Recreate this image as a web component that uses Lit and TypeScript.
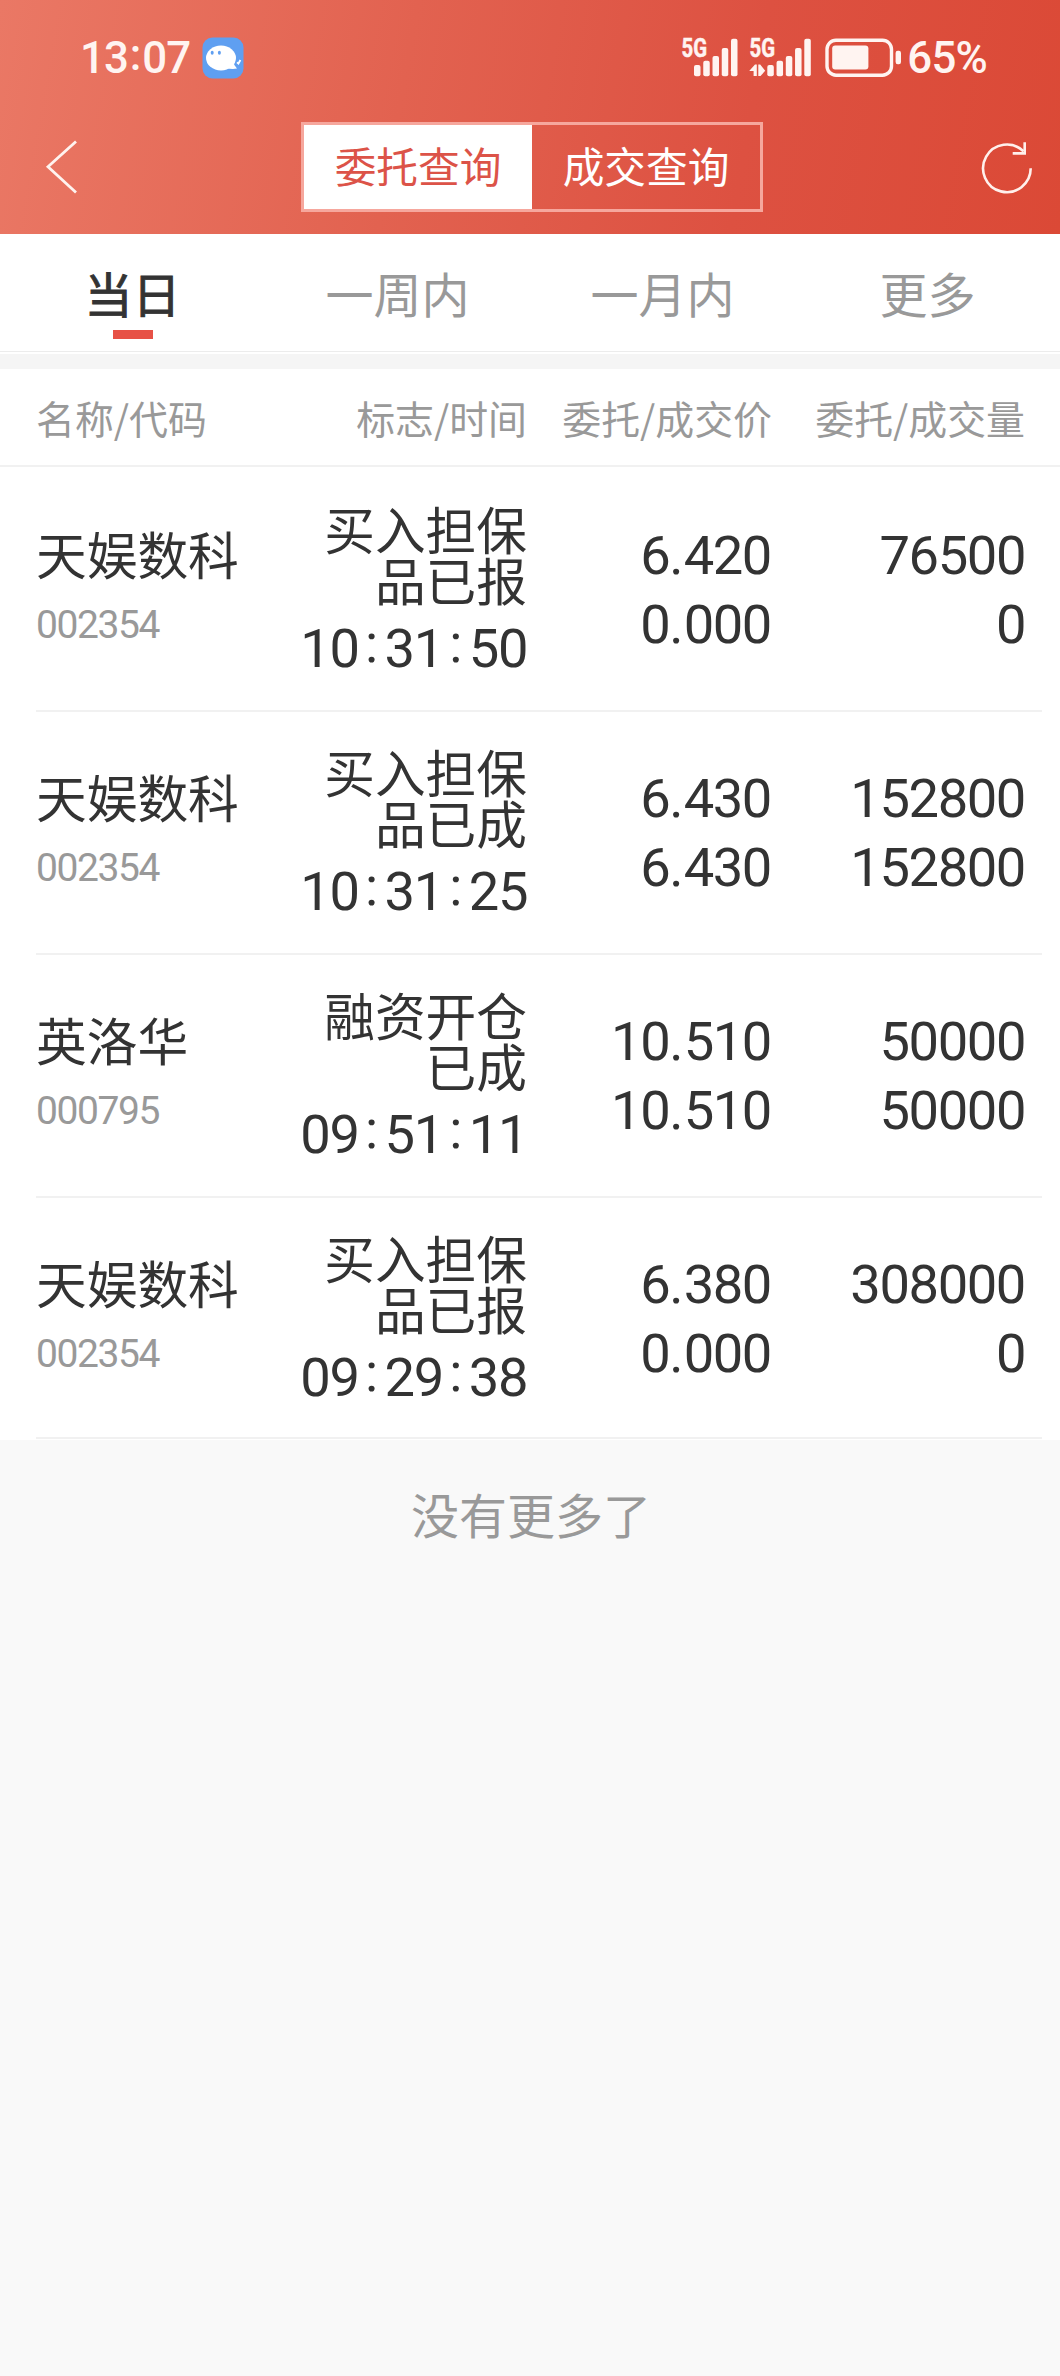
import { LitElement, html, css, svg } from "lit";
import { customElement, property, state } from "lit/decorators.js";
import { classMap } from "lit/directives/class-map.js";

interface Order {
  name: string;
  code: string;
  flag: [string, string];
  time: string;
  price: [string, string];
  volume: [string, string];
}

const ORDERS: Order[] = [
  { name: "天娱数科", code: "002354", flag: ["买入担保", "品已报"], time: "10:31:50", price: ["6.420", "0.000"], volume: ["76500", "0"] },
  { name: "天娱数科", code: "002354", flag: ["买入担保", "品已成"], time: "10:31:25", price: ["6.430", "6.430"], volume: ["152800", "152800"] },
  { name: "英洛华", code: "000795", flag: ["融资开仓", "已成"], time: "09:51:11", price: ["10.510", "10.510"], volume: ["50000", "50000"] },
  { name: "天娱数科", code: "002354", flag: ["买入担保", "品已报"], time: "09:29:38", price: ["6.380", "0.000"], volume: ["308000", "0"] },
];

/** Android status bar: clock, chat notification, signals and battery. */
@customElement("status-bar")
export class StatusBar extends LitElement {
  static styles = css`
    :host { display: block; }
    .bar {
      display: flex;
      justify-content: space-between;
      align-items: center;
      height: 116px;
      padding: 0 73px 0 80px;
      box-sizing: border-box;
      font: 500 43.8px/52px Roboto, sans-serif;
      letter-spacing: -0.8px;
      color: #fff4f1;
    }
    .group { display: flex; align-items: center; }
    .chat { display: block; margin-left: 12px; }
    .colon { display: inline-block; width: 14px; text-align: center; line-height: 44px; vertical-align: 3px; }
    .signals { display: block; }
    .small { font: 700 25px Roboto, sans-serif; letter-spacing: 0; stroke: #fff4f1; stroke-width: 0.5; }
  `;

  private bars(x: number) {
    const tops = [65, 60.7, 56, 48, 38.7];
    return tops.map(
      (t, i) => svg`<rect x=${x + i * 9.25} y=${t - 36} width="6.5" height=${76.2 - t} rx="2" />`
    );
  }

  render() {
    return html`
      <div class="bar">
        <div class="group">
          <span>13<span class="colon">:</span>07</span>
          <svg class="chat" width="42" height="42" viewBox="0 0 42 42">
            <rect x="0.5" y="0.5" width="41" height="41" rx="10" fill="#5f9ff1" />
            <ellipse cx="19" cy="21" rx="15" ry="12.5" fill="#fff" />
            <path d="M31 24 Q32 29 35 31.5 Q30 32.5 24 31 Z" fill="#fff" />
            <ellipse cx="10.2" cy="15.8" rx="1.5" ry="2" fill="#5f9ff1" />
            <ellipse cx="17.4" cy="15.8" rx="1.5" ry="2" fill="#5f9ff1" />
            <path d="M35 25.4 L36.4 26.6 L38.4 23" fill="none" stroke="#fff" stroke-width="1.9" />
          </svg>
        </div>
        <div class="group">
          <svg class="signals" width="227" height="60" viewBox="0 -8 227 60" fill="#fff4f1">
            <text class="small" x="1.5" y="21.3" textLength="25.5" lengthAdjust="spacingAndGlyphs">5G</text>
            ${this.bars(14)}
            <text class="small" x="69.5" y="21.3" textLength="25.5" lengthAdjust="spacingAndGlyphs">5G</text>
            <path d="M69.2 35 L75 28.5 H76.8 V40 H73.6 V35 Z M78.3 28.5 H80.2 L85.2 34.8 L80.5 40 H78.3 Z" />
            ${this.bars(87.3)}
            <rect x="147" y="4.2" width="64.5" height="35" rx="9" fill="none" stroke="#fff4f1" stroke-width="3.4" />
            <rect x="152.2" y="9.6" width="36.2" height="24" rx="3" />
            <rect x="215.6" y="14.8" width="5.4" height="13.4" rx="2.2" />
          </svg>
          <span>65%</span>
        </div>
      </div>
    `;
  }
}

/** Title bar with the back button, the two-way switch and refresh. */
@customElement("title-bar")
export class TitleBar extends LitElement {
  static styles = css`
    :host { display: block; }
    .bar {
      display: flex;
      justify-content: space-between;
      align-items: flex-start;
      padding: 6px 26px 0 44px;
    }
    .icon { display: block; margin-top: 15px; }
    .switch {
      display: flex;
      box-sizing: border-box;
      width: 462px;
      height: 90px;
      margin-left: 4px;
      border: 3px solid #f6a79d;
    }
    .option {
      flex: 1;
      text-align: center;
      font: 400 41.7px/81px "Noto Sans CJK SC", sans-serif;
      color: #fff;
    }
    .active { background: #fff; color: #dc5348; }
  `;

  @state() private selected = 0;

  render() {
    return html`
      <div class="bar">
        <svg class="icon" width="36" height="60" viewBox="0 0 36 60" fill="none" stroke="#fff3ef" stroke-width="2.8">
          <path d="M32 4.5 L4 29.8 L32 55.5" />
        </svg>
        <div class="switch">
          ${["委托查询", "成交查询"].map(
            (label, i) => html`<div
              class=${classMap({ option: true, active: i === this.selected })}
              @click=${() => (this.selected = i)}
            >${label}</div>`
          )}
        </div>
        <svg class="icon" width="54" height="60" viewBox="0 0 54 60" fill="none" stroke="#fff0ec" stroke-width="2.6">
          <path d="M50.7 31.3 A23.8 23.8 0 1 1 43.5 14.3" />
          <path d="M44.7 5.3 V16.4 H32.7" />
        </svg>
      </div>
    `;
  }
}

/** Period tabs. */
@customElement("period-tabs")
export class PeriodTabs extends LitElement {
  static styles = css`
    :host { display: block; }
    .tabs {
      display: grid;
      grid-template-columns: repeat(4, 1fr);
      height: 117px;
      background: #fff;
      border-bottom: 1px solid #ececec;
    }
    .tab {
      display: flex;
      flex-direction: column;
      align-items: center;
      padding-top: 23px;
      font: 400 48px/70px "Noto Sans CJK SC", sans-serif;
      color: #999;
    }
    .active { color: #333; -webkit-text-stroke: 0.9px #333; }
    .active::after { content: ""; width: 40px; height: 9px; margin-top: 3px; background: #e75146; }
  `;

  @state() private selected = 0;

  render() {
    return html`<div class="tabs">
      ${["当日", "一周内", "一月内", "更多"].map(
        (label, i) => html`<div
          class=${classMap({ tab: true, active: i === this.selected })}
          @click=${() => (this.selected = i)}
        >${label}</div>`
      )}
    </div>`;
  }
}

/** One order in the list. */
@customElement("order-row")
export class OrderRow extends LitElement {
  static styles = css`
    :host { display: block; height: 243px; }
    .row {
      display: grid;
      grid-template-columns: 240px 251px 244px 254px;
      box-sizing: border-box;
      height: 100%;
      margin: 0 18px 0 36px;
      border-bottom: 2px solid #f1f1f1;
      color: #333;
    }
    .name { padding-top: 47px; font: 400 50.7px/74px "Noto Sans CJK SC", sans-serif; }
    .code { font: 400 39px/60px Roboto, sans-serif; letter-spacing: -1.4px; color: #999; margin-top: 5px; }
    .right { text-align: right; }
    .flag { padding-top: 34px; font: 400 50.7px/51px "Noto Sans CJK SC", sans-serif; }
    .num { font: 400 54.3px/69px Roboto, sans-serif; letter-spacing: -1.4px; }
    .time { margin-top: 9px; }
    .values { padding-top: 52px; }
    .dot, .colon { display: inline-block; text-align: center; letter-spacing: 0; }
    .dot { width: 14.3px; }
    .colon { width: 26px; line-height: 40px; vertical-align: 5px; }
  `;

  @property({ attribute: false }) order!: Order;

  private num(text: string) {
    return text
      .split(/([.:])/)
      .map((p) =>
        p === "." ? html`<span class="dot">.</span>` : p === ":" ? html`<span class="colon">:</span>` : p
      );
  }

  render() {
    const o = this.order;
    return html`<div class="row">
      <div>
        <div class="name">${o.name}</div>
        <div class="code">${o.code}</div>
      </div>
      <div class="right">
        <div class="flag">${o.flag[0]}<br />${o.flag[1]}</div>
        <div class="num time">${this.num(o.time)}</div>
      </div>
      <div class="right values">${o.price.map((v) => html`<div class="num">${this.num(v)}</div>`)}</div>
      <div class="right values">${o.volume.map((v) => html`<div class="num">${this.num(v)}</div>`)}</div>
    </div>`;
  }
}

@customElement("app-root")
export class AppRoot extends LitElement {
  static styles = css`
    :host { display: block; }
    .page { min-height: 2376px; background: #f9f9f9; }
    .top { height: 234px; background: linear-gradient(100deg, #ea7865 0%, #e26250 38%, #dd5141 70%, #db4936 100%); }
    .band { height: 15px; border-top: 2px solid #fff; background: #f5f5f5; }
    .head {
      display: grid;
      grid-template-columns: 200px 291px 245px 253px;
      padding: 0 35px 0 36px;
      height: 96px;
      background: #fff;
      border-bottom: 2px solid #f1f1f1;
      font: 400 38.9px/97px "Noto Sans CJK SC", sans-serif;
      color: #999;
      white-space: nowrap;
    }
    .right { text-align: right; }
    .list { padding: 2px 0 1px; background: #fff; }
    .list order-row:last-child { height: 241px; }
    .end {
      padding: 38px 0 0 2px;
      text-align: center;
      font: 400 48px/70px "Noto Sans CJK SC", sans-serif;
      color: #999;
    }
  `;

  render() {
    return html`
      <div class="page">
        <div class="top">
          <status-bar></status-bar>
          <title-bar></title-bar>
        </div>
        <period-tabs></period-tabs>
        <div class="band"></div>
        <div class="head">
          <div>名称/代码</div>
          <div class="right">标志/时间</div>
          <div class="right">委托/成交价</div>
          <div class="right">委托/成交量</div>
        </div>
        <div class="list">${ORDERS.map((o) => html`<order-row .order=${o}></order-row>`)}</div>
        <div class="end">没有更多了</div>
      </div>
    `;
  }
}
